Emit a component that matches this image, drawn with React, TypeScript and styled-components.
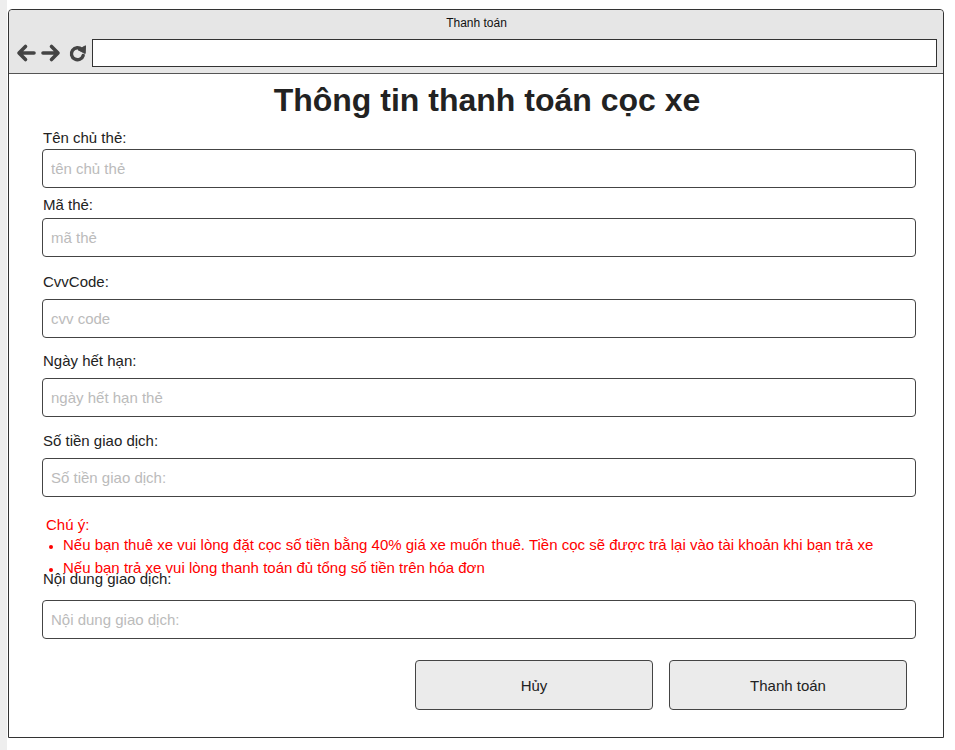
import styled, { createGlobalStyle } from 'styled-components';

const GlobalStyle = createGlobalStyle`
	html, body {
		margin: 0;
		padding: 0;
		background: #fff;
		font-family: 'Liberation Sans', Arial, sans-serif;
	}
	* { box-sizing: border-box; }
`;

type FieldDef = {
	label: string;
	placeholder: string;
	top: number;
	gap: number;
};

const fields: FieldDef[] = [
	{ label: 'Tên chủ thẻ:', placeholder: 'tên chủ thẻ', top: 10, gap: 3 },
	{ label: 'Mã thẻ:', placeholder: 'mã thẻ', top: 8, gap: 5 },
	{ label: 'CvvCode:', placeholder: 'cvv code', top: 16, gap: 9 },
	{ label: 'Ngày hết hạn:', placeholder: 'ngày hết hạn thẻ', top: 14, gap: 9 },
	{ label: 'Số tiền giao dịch:', placeholder: 'Số tiền giao dịch:', top: 15, gap: 9 },
];

const Page = styled.div`
	display: flex;
	min-height: 750px;
`;

const SideStrip = styled.div`
	width: 7px;
	background: #eeeeee;
	flex-shrink: 0;
`;

const Window = styled.div`
	margin: 9px 0 12px 1px;
	width: 936px;
	height: 729px;
	border: 1px solid #333;
	border-radius: 4px 4px 0 0;
	display: flex;
	flex-direction: column;
	background: #fff;
`;

const TitleBar = styled.div`
	background: #e6e6e6;
	border-bottom: 1px solid #555;
	border-radius: 4px 4px 0 0;
	height: 64px;
	padding: 6px 6px 0 7px;
	display: flex;
	flex-direction: column;
`;

const WindowTitle = styled.div`
	text-align: center;
	font-size: 12px;
	line-height: 14px;
	color: #111;
`;

const NavRow = styled.div`
	margin-top: 9px;
	display: flex;
	align-items: center;
	gap: 5px;
`;

const NavIcon = styled.svg`
	display: block;
	flex-shrink: 0;
`;

const AddressBar = styled.div`
	flex: 1;
	height: 28px;
	border: 1px solid #333;
	background: #fff;
`;

const Content = styled.div`
	flex: 1;
	padding: 8px 27px 0 33px;
	display: flex;
	flex-direction: column;
`;

const Heading = styled.h1`
	margin: 0;
	text-align: center;
	font-size: 32px;
	line-height: 37px;
	font-weight: 700;
	color: #222;
	padding-left: 16px;
`;

const FieldBlock = styled.div<{ $top: number }>`
	margin-top: ${p => p.$top}px;
	display: flex;
	flex-direction: column;
`;

const Label = styled.label<{ $gap: number }>`
	font-size: 15px;
	line-height: 17px;
	color: #222;
	padding-left: 1px;
	margin-bottom: ${p => p.$gap}px;
`;

const Input = styled.input`
	width: 100%;
	height: 39px;
	border: 1px solid #444;
	border-radius: 4px;
	padding: 0 8px;
	font-family: 'Liberation Sans', Arial, sans-serif;
	font-size: 15px;
	color: #222;
	outline: none;
	&::placeholder {
		color: #bbb;
	}
`;

const Note = styled.div`
	margin-top: 19px;
	height: 54px;
	color: #f00;
	font-size: 15px;
	padding-left: 4px;
`;

const NoteTitle = styled.div`
	line-height: 17px;
`;

const NoteList = styled.ul`
	margin: 0;
	padding-left: 17px;
	line-height: 23px;
	li::marker {
		font-size: 12px;
	}
`;

const ActionRow = styled.div`
	margin-top: 21px;
	display: flex;
	justify-content: flex-end;
	gap: 16px;
	padding-right: 9px;
`;

const ActionButton = styled.button`
	width: 238px;
	height: 50px;
	background: #ebebeb;
	border: 1px solid #444;
	border-radius: 4px;
	font-family: 'Liberation Sans', Arial, sans-serif;
	font-size: 15px;
	color: #222;
	cursor: pointer;
`;

const BackIcon = () => (
	<NavIcon width='20' height='20' viewBox='0 0 20 20'>
		<path d='M18 10H3.5M9.5 3.5L3 10L9.5 16.5' fill='none' stroke='#444' strokeWidth='3.6' strokeLinecap='round' strokeLinejoin='round' />
	</NavIcon>
);

const ForwardIcon = () => (
	<NavIcon width='20' height='20' viewBox='0 0 20 20'>
		<path d='M2 10H16.5M10.5 3.5L17 10L10.5 16.5' fill='none' stroke='#444' strokeWidth='3.6' strokeLinecap='round' strokeLinejoin='round' />
	</NavIcon>
);

const ReloadIcon = () => (
	<NavIcon width='19' height='20' viewBox='0 0 19 20' style={{ marginLeft: 2 }}>
		<path d='M13.8 6.6A6 6 0 1 0 15.2 12.4' fill='none' stroke='#444' strokeWidth='3.4' strokeLinecap='round' />
		<path d='M10 6.8L17.5 2.8L17.2 10.5Z' fill='#444' stroke='#444' strokeWidth='1' strokeLinejoin='round' />
	</NavIcon>
);

const App = () => (
	<>
		<GlobalStyle />
		<Page>
			<SideStrip />
			<Window>
				<TitleBar>
					<WindowTitle>Thanh toán</WindowTitle>
					<NavRow>
						<BackIcon />
						<ForwardIcon />
						<ReloadIcon />
						<AddressBar />
					</NavRow>
				</TitleBar>
				<Content>
					<Heading>Thông tin thanh toán cọc xe</Heading>
					{fields.map(f => (
						<FieldBlock key={f.label} $top={f.top}>
							<Label $gap={f.gap}>{f.label}</Label>
							<Input placeholder={f.placeholder} />
						</FieldBlock>
					))}
					<Note>
						<NoteTitle>Chú ý:</NoteTitle>
						<NoteList>
							<li>Nếu bạn thuê xe vui lòng đặt cọc số tiền bằng 40% giá xe muốn thuê. Tiền cọc sẽ được trả lại vào tài khoản khi bạn trả xe</li>
							<li>Nếu bạn trả xe vui lòng thanh toán đủ tổng số tiền trên hóa đơn</li>
						</NoteList>
					</Note>
					<FieldBlock $top={0}>
						<Label $gap={13}>Nội dung giao dịch:</Label>
						<Input placeholder='Nội dung giao dịch:' />
					</FieldBlock>
					<ActionRow>
						<ActionButton>Hủy</ActionButton>
						<ActionButton>Thanh toán</ActionButton>
					</ActionRow>
				</Content>
			</Window>
		</Page>
	</>
);

export default App;
